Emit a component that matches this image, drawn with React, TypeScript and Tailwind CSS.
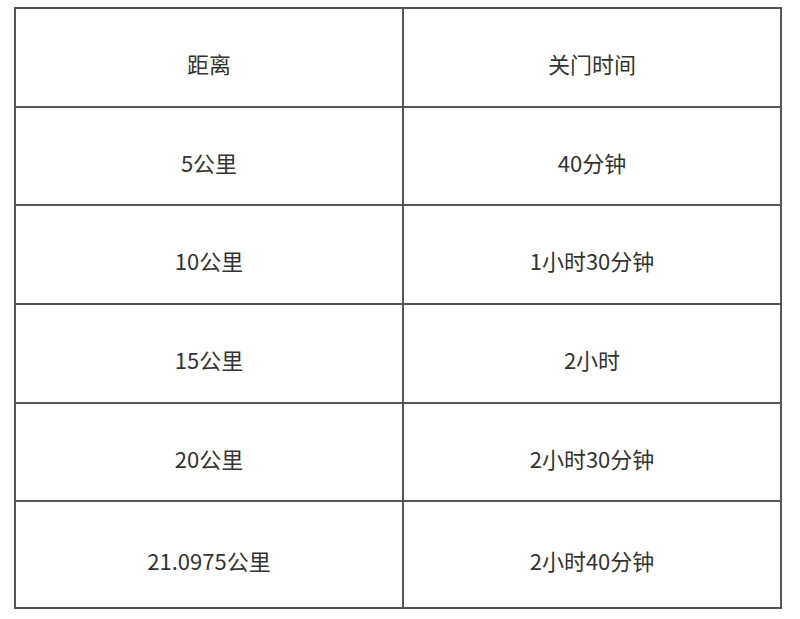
const ROWS = [
  { dist: "5公里", close: "40分钟" },
  { dist: "10公里", close: "1小时30分钟" },
  { dist: "15公里", close: "2小时" },
  { dist: "20公里", close: "2小时30分钟" },
  { dist: "21.0975公里", close: "2小时40分钟" },
]

export default function App() {
  return (
    <div className="w-[800px] h-[619px] bg-white pl-[14px] pt-[7px] text-[#333] font-['Noto_Sans_CJK_SC','Noto_Sans',sans-serif]">
      <table className="w-[768px] border-collapse text-[22px] text-center">
        <tbody>
          <tr className="h-[99px]">
            <td className="w-[388px] border-2 border-[#555] pt-3">距离</td>
            <td className="border-2 border-[#555] pt-3">关门时间</td>
          </tr>
          {ROWS.map((r, i) => (
            <tr key={r.dist} className={i === ROWS.length - 1 ? "h-[107px]" : i === 0 || i === 3 ? "h-[98px]" : "h-[99px]"}>
              <td className="border-2 border-[#555] pt-3">{r.dist}</td>
              <td className="border-2 border-[#555] pt-3">{r.close}</td>
            </tr>
          ))}
        </tbody>
      </table>
    </div>
  )
}
